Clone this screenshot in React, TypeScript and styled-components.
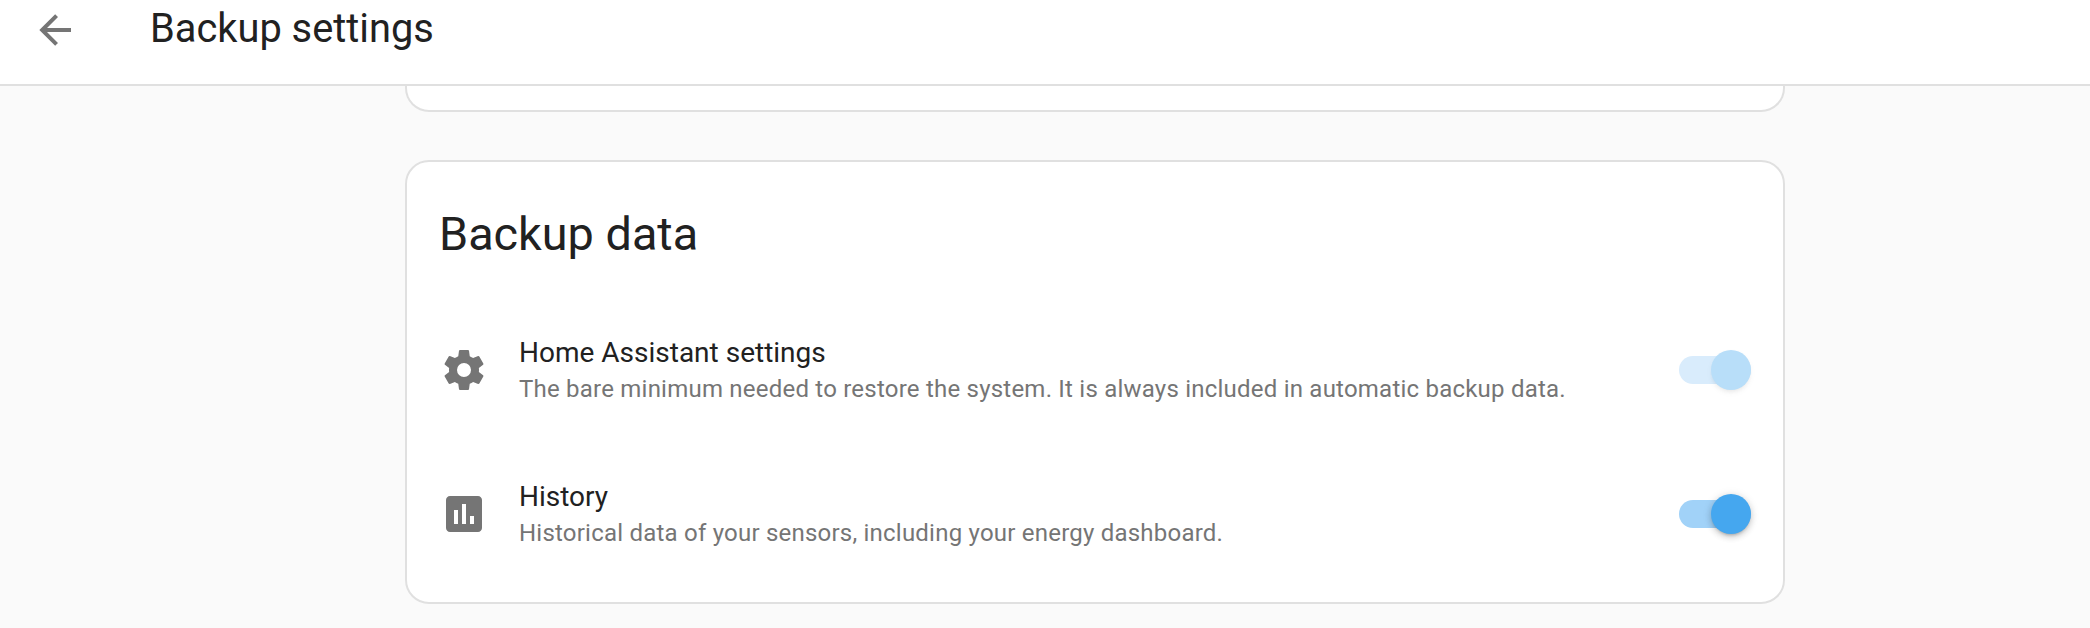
import React from "react";
import styled, { createGlobalStyle } from "styled-components";

const GlobalStyle = createGlobalStyle`
    html, body {
        margin: 0;
        padding: 0;
        background: #fafafa;
    }
    body {
        font-family: Roboto, "Noto Sans", sans-serif;
        color: #212121;
    }
`;

const Page = styled.div`
    height: 628px;
    overflow: hidden;
    display: flex;
    flex-direction: column;
`;

const Toolbar = styled.header`
    flex: none;
    box-sizing: border-box;
    height: 86px;
    display: flex;
    align-items: flex-start;
    padding: 5px 0 0 31px;
    background: #fff;
    border-bottom: 2px solid #e0e0e0;
`;

const ToolbarTitle = styled.h1`
    margin: 0 0 0 71px;
    font-size: 39.8px;
    font-weight: 400;
    line-height: 48px;
`;

const Content = styled.main`
    width: 1380px;
    margin-left: 405px;
    display: flex;
    flex-direction: column;
    gap: 48px;
`;

const Card = styled.section<{ $clipped?: boolean }>`
    box-sizing: border-box;
    background: #fff;
    border: 2px solid #e0e0e0;
    border-radius: 24px;
    ${(p) => p.$clipped && `
        height: 26px;
        border-top: 0;
        border-radius: 0 0 24px 24px;
    `}
`;

const DataCard = styled(Card)`
    height: 444px;
    padding: 0 32px 0 33px;
`;

const CardTitle = styled.h2`
    margin: 0 0 0 -1px;
    padding: 47px 0 0 0;
    font-size: 46.8px;
    font-weight: 400;
    line-height: 50px;
`;

const Rows = styled.div`
    margin-top: 63px;
    display: flex;
    flex-direction: column;
    gap: 48px;
`;

const Row = styled.div`
    height: 96px;
    display: flex;
    align-items: center;
`;

const Icon = styled.svg`
    flex: none;
    width: 48px;
    height: 48px;
    fill: #757575;
`;

const BackIcon = styled(Icon)`
    margin-top: 1px;
`;

const RowText = styled.div`
    flex: 1;
    margin-left: 31px;
    padding-top: 3px;
    display: flex;
    flex-direction: column;
`;

const RowTitle = styled.div`
    font-size: 28px;
    line-height: 36px;
`;

const RowDescription = styled.div`
    font-size: 24px;
    letter-spacing: 0.22px;
    line-height: 37px;
    color: #757575;
`;

const Switch = styled.div<{ $disabled?: boolean }>`
    flex: none;
    position: relative;
    width: 72px;
    height: 28px;
    border-radius: 14px;
    background: ${(p) => (p.$disabled ? "#d9ecfc" : "#a1d2f8")};
`;

const Thumb = styled.span<{ $disabled?: boolean }>`
    position: absolute;
    top: -6px;
    right: 0;
    width: 40px;
    height: 40px;
    border-radius: 50%;
    background: ${(p) => (p.$disabled ? "#b8def9" : "#45a7ef")};
    box-shadow: ${(p) => p.$disabled
        ? "0 3px 4px -2px rgba(0, 0, 0, 0.07), 0 3px 6px 0 rgba(0, 0, 0, 0.04)"
        : "0 3px 3px -2px rgba(0, 0, 0, 0.2), 0 3px 6px 0 rgba(0, 0, 0, 0.14), 0 1px 10px 0 rgba(0, 0, 0, 0.12)"};
`;

const arrowLeft = "M20,11V13H8L13.5,18.5L12.08,19.92L4.16,12L12.08,4.08L13.5,5.5L8,11H20Z";
const cog = "M12,15.5A3.5,3.5 0 0,1 8.5,12A3.5,3.5 0 0,1 12,8.5A3.5,3.5 0 0,1 15.5,12A3.5,3.5 0 0,1 12,15.5M19.43,12.97C19.47,12.65 19.5,12.33 19.5,12C19.5,11.67 19.47,11.34 19.43,11L21.54,9.37C21.73,9.22 21.78,8.95 21.66,8.73L19.66,5.27C19.54,5.05 19.27,4.96 19.05,5.05L16.56,6.05C16.04,5.66 15.5,5.32 14.87,5.07L14.5,2.42C14.46,2.18 14.25,2 14,2H10C9.75,2 9.54,2.18 9.5,2.42L9.13,5.07C8.5,5.32 7.96,5.66 7.44,6.05L4.95,5.05C4.73,4.96 4.46,5.05 4.34,5.27L2.34,8.73C2.21,8.95 2.27,9.22 2.46,9.37L4.57,11C4.53,11.34 4.5,11.67 4.5,12C4.5,12.33 4.53,12.65 4.57,12.97L2.46,14.63C2.27,14.78 2.21,15.05 2.34,15.27L4.34,18.73C4.46,18.95 4.73,19.03 4.95,18.95L7.44,17.94C7.96,18.34 8.5,18.68 9.13,18.93L9.5,21.58C9.54,21.82 9.75,22 10,22H14C14.25,22 14.46,21.82 14.5,21.58L14.87,18.93C15.5,18.67 16.04,18.34 16.56,17.94L19.05,18.95C19.27,19.03 19.54,18.95 19.66,18.73L21.66,15.27C21.78,15.05 21.73,14.78 21.54,14.63L19.43,12.97Z";
const chartBox = "M9 17H7V10H9V17M13 17H11V7H13V17M17 17H15V13H17V17M19 3H5C3.9 3 3 3.9 3 5V19C3 20.1 3.9 21 5 21H19C20.1 21 21 20.1 21 19V5C21 3.9 20.1 3 19 3Z";

const rows = [
    {
        icon: cog,
        title: "Home Assistant settings",
        description: "The bare minimum needed to restore the system. It is always included in automatic backup data.",
        disabled: true,
    },
    {
        icon: chartBox,
        title: "History",
        description: "Historical data of your sensors, including your energy dashboard.",
        disabled: false,
    },
];

const App = () => {
    return <Page>
        <GlobalStyle />
        <Toolbar>
            <BackIcon viewBox="0 0 24 24"><path d={arrowLeft} /></BackIcon>
            <ToolbarTitle>Backup settings</ToolbarTitle>
        </Toolbar>
        <Content>
            <Card $clipped />
            <DataCard>
                <CardTitle>Backup data</CardTitle>
                <Rows>
                    {rows.map((row) => <Row key={row.title}>
                        <Icon viewBox="0 0 24 24"><path d={row.icon} /></Icon>
                        <RowText>
                            <RowTitle>{row.title}</RowTitle>
                            <RowDescription>{row.description}</RowDescription>
                        </RowText>
                        <Switch $disabled={row.disabled}>
                            <Thumb $disabled={row.disabled} />
                        </Switch>
                    </Row>)}
                </Rows>
            </DataCard>
        </Content>
    </Page>;
};

export default App;
